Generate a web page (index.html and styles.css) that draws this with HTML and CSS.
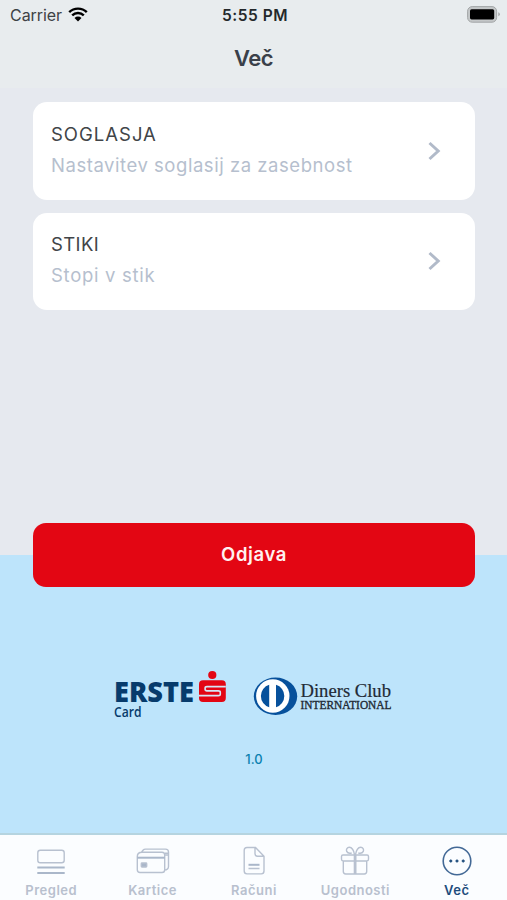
FILE: index.html
```html
<!DOCTYPE html>
<html lang="sl">
<head>
    <meta charset="UTF-8">
    <meta name="viewport" content="width=device-width, initial-scale=1.0">
    <title>Več</title>
    <link rel="stylesheet" href="styles.css">
</head>
<body>
    <div class="app">
        <div class="status-bar">
            <div class="carrier">
                <span>Carrier</span>
                <svg width="20" height="15" viewBox="0 0 20 15">
                    <path d="M1.2 5.2a12.6 12.6 0 0 1 17.6 0M4.2 8.3a8.3 8.3 0 0 1 11.6 0" fill="none" stroke="#000" stroke-width="2.4"/>
                    <path d="M6.5 11a5 5 0 0 1 7 0L10 14.6z"/>
                </svg>
            </div>
            <div class="clock">5:55 PM</div>
            <div class="battery">
                <svg width="33" height="17" viewBox="0 0 33 17">
                    <rect x=".6" y=".6" width="29" height="15.6" rx="4.6" fill="#c4c7c8" stroke="#a3a6a7"/>
                    <rect x="3" y="3.2" width="24.2" height="10.2" rx="1.6"/>
                    <path d="M31.3 6.2q1.5.5 1.5 2t-1.5 2z" fill="#a3a6a7"/>
                </svg>
            </div>
        </div>

        <header class="header">
            <h1>Več</h1>
        </header>

        <main class="content">
            <a class="card" href="#">
                <div class="card-text">
                    <div class="card-title soglasja">SOGLASJA</div>
                    <div class="card-subtitle">Nastavitev soglasij za zasebnost</div>
                </div>
                <svg class="chevron" width="14" height="20" viewBox="0 0 14 20"><path d="M2.5 2l8.7 8-8.7 8"/></svg>
            </a>
            <a class="card" href="#">
                <div class="card-text">
                    <div class="card-title">STIKI</div>
                    <div class="card-subtitle stik">Stopi v stik</div>
                </div>
                <svg class="chevron" width="14" height="20" viewBox="0 0 14 20"><path d="M2.5 2l8.7 8-8.7 8"/></svg>
            </a>
        </main>

        <section class="bottom-panel">
            <button class="logout" type="button">Odjava</button>
            <div class="logos">
                <svg width="114" height="52" viewBox="0 0 114 52" fill="#073b6c">
                    <text x="1" y="31.7" class="erste" textLength="80" lengthAdjust="spacingAndGlyphs">ERSTE</text>
                    <text x="1" y="47" class="erste-card" textLength="27.5" lengthAdjust="spacingAndGlyphs">Card</text>
                    <g fill="#e30613">
                        <circle cx="99.3" cy="5" r="4.1"/>
                        <rect x="86" y="10.3" width="26.8" height="21.7" rx="4"/>
                    </g>
                    <path d="M112.8 16.6H94q-1.9 0-1.9 1.6v1.1q0 1.6 1.9 1.6h11.3q2 0 2 1.6v1.4q0 1.7-2 1.7H86" fill="none" stroke="#d5e6f5" stroke-width="1.6"/>
                </svg>
                <svg width="142" height="40" viewBox="0 0 142 40">
                    <ellipse cx="22.5" cy="19.3" rx="21.7" ry="18.7" fill="#07519c"/>
                    <circle cx="19.8" cy="19" r="16.7" fill="#fff"/>
                    <path d="M16.2 7.8a11.7 11.7 0 0 0 0 22.4zM23 7.8a11.7 11.7 0 0 1 0 22.4z" fill="#07519c"/>
                    <g fill="#222a35" class="diners">
                        <text x="47.5" y="19.8" font-size="19.5" stroke="#222a35" stroke-width=".2" textLength="90.5" lengthAdjust="spacingAndGlyphs">Diners Club</text>
                        <text x="47.5" y="31.6" font-size="11.5" stroke="#222a35" stroke-width=".35" textLength="91" lengthAdjust="spacingAndGlyphs">INTERNATIONAL</text>
                    </g>
                </svg>
            </div>
            <div class="version">1.0</div>
        </section>

        <nav class="tab-bar">
            <a class="tab" href="#">
                <svg width="32" height="32" viewBox="0 0 32 32">
                    <rect x="2.8" y="5.2" width="26.4" height="12.6" rx="2.5"/>
                    <path class="thick" d="M2.3 22.6h27.4M2.3 28h27.4"/>
                </svg>
                <span>Pregled</span>
            </a>
            <a class="tab" href="#">
                <svg width="36" height="32" viewBox="0 0 36 32">
                    <path d="M6.5 7.2L8 5.3q1-1.2 2.5-1.2h20q3 0 3 3v14.4q0 3.4-4.2 3.6M7 7.2h20q2.7 0 2.7 2.8v14.7q0 2.8-2.7 2.8H5q-2.7 0-2.7-2.8V11.5Q2.3 7.2 7 7.2zM29.8 8.2h3.7M29.8 10h3.7"/>
                    <path class="thick" d="M2.3 12.7h27.4"/>
                    <rect class="filled" x="6.3" y="18" width="5.4" height="4" rx=".7"/>
                </svg>
                <span>Kartice</span>
            </a>
            <a class="tab" href="#">
                <svg width="28" height="32" viewBox="0 0 28 32">
                    <path d="M15.5 2.5H7q-2.8 0-2.8 2.8v20.8q0 2.8 2.8 2.8h14.3q2.7 0 2.7-2.8V11.2L15.5 2.5zM15 2.8v6q0 2.4 2.4 2.4H24M8.5 23.5h11"/>
                    <path class="thick" d="M8.5 19.8h11"/>
                </svg>
                <span>Računi</span>
            </a>
            <a class="tab" href="#">
                <svg width="32" height="32" viewBox="0 0 32 32">
                    <path d="M4.3 16v10.6q0 2.4 2.4 2.4h18.6q2.4 0 2.4-2.4V16M4 10h24q1.5 0 1.5 1.5v2.8q0 1.7-1.7 1.7H4.2q-1.7 0-1.7-1.7v-2.8Q2.5 10 4 10zM15.4 10v19M16.8 10v19M15.7 10.3C14.8 5 12.5 2.2 10.3 2.2S6.9 4.7 7.7 6.4 10.5 8.6 12.7 8M16.3 10.3c.9-5.3 3.2-8.1 5.4-8.1s3.4 2.5 2.6 4.2S21.5 8.6 19.3 8"/>
                </svg>
                <span>Ugodnosti</span>
            </a>
            <a class="tab active" href="#">
                <svg width="32" height="32" viewBox="0 0 32 32">
                    <circle cx="16" cy="16" r="13.8"/>
                    <g class="filled"><circle cx="9.8" cy="16" r="1.1"/><circle cx="16" cy="16" r="1.1"/><circle cx="22.2" cy="16" r="1.1"/></g>
                </svg>
                <span>Več</span>
            </a>
        </nav>
    </div>
</body>
</html>
```
FILE: styles.css
```css
:root {
    --page-bg: #e6e9ef;
    --header-bg: #e8ecee;
    --panel-bg: #bde4fb;
    --primary-red: #e30613;
    --text-dark: #414448;
    --text-muted: #b6bfce;
    --active-blue: #1d4c7c;
    --font-family: Inter, 'Liberation Sans', sans-serif;
}
*, *::before, *::after { box-sizing: border-box; }
body { margin: 0; font-family: var(--font-family); background-color: var(--page-bg); }
a { color: inherit; text-decoration: none; }
svg { display: block; flex-shrink: 0; }
.app { height: 900px; display: flex; flex-direction: column; }
.status-bar { height: 30px; display: grid; grid-template-columns: 1fr auto 1fr; align-items: center; padding: 0 7px 0 10px; background-color: var(--header-bg); color: #24282b; font-size: 16px; }
.carrier { display: flex; align-items: center; gap: 6px; color: #3e4245; letter-spacing: -0.05px; }
.carrier svg { margin-top: -2px; }
.clock { font-weight: 600; font-size: 15.5px; letter-spacing: 0.5px; }
.battery { display: flex; justify-content: flex-end; margin-top: -2px; }
.header { height: 58px; display: flex; justify-content: center; background-color: var(--header-bg); }
.header h1 { margin: 14px 0 0; font-size: 22px; line-height: 28px; font-weight: 600; color: #3a4049; letter-spacing: -0.5px; }
.content { flex: 1; display: flex; flex-direction: column; gap: 13px; padding: 14px 32px 0 33px; }
.card { height: 97.5px; display: flex; align-items: center; justify-content: space-between; padding: 0 34px 0 18px; background-color: #fff; border-radius: 14px; }
.card-text { display: flex; flex-direction: column; gap: 7px; margin-top: -3px; white-space: nowrap; }
.card-title { font-size: 18.5px; line-height: 24px; color: var(--text-dark); letter-spacing: 0.4px; }
.card-title.soglasja { letter-spacing: 1px; }
.card-subtitle { font-size: 18.5px; line-height: 24px; color: var(--text-muted); letter-spacing: 0.54px; }
.card-subtitle.stik { letter-spacing: 0.7px; }
.chevron { fill: none; stroke: #b1bac9; stroke-width: 3; }
.bottom-panel { height: 278px; display: flex; flex-direction: column; align-items: center; padding: 0 32px 0 33px; background-color: var(--panel-bg); }
.logout { width: 100%; height: 64px; flex-shrink: 0; margin-top: -32px; padding: 0 0 3px; border: 0; border-radius: 13px; background-color: var(--primary-red); color: #fff1f0; font: 600 18.5px var(--font-family); letter-spacing: 0.6px; }
.logos { width: 100%; display: flex; align-items: flex-start; gap: 26px; padding-left: 80px; margin-top: 83px; }
.logos svg:last-child { margin-top: 7px; }
.erste { font: 800 29px 'Open Sans', sans-serif; }
.erste-card { font: 600 15px 'Open Sans', sans-serif; }
.diners { font-family: 'Liberation Serif', serif; }
.version { margin-top: 29px; font-size: 13px; line-height: 16px; font-weight: 500; color: #0b80af; }
.tab-bar { height: 67px; display: grid; grid-template-columns: repeat(5, 1fr); padding-top: 10px; border-top: 2px solid #b5d4e0; background-color: #fbfdff; }
.tab { display: flex; flex-direction: column; align-items: center; gap: 5px; padding-left: 1px; font-size: 13px; line-height: 16px; font-weight: 600; color: #b8c0ce; letter-spacing: 0.5px; }
.tab svg { fill: none; stroke: #b8c1d0; stroke-width: 1.4; }
.tab .thick { stroke: #aab7ca; stroke-width: 2; }
.tab .filled { fill: #aab7ca; }
.tab.active { color: var(--active-blue); }
.tab.active svg { stroke: #436996; stroke-width: 1.6; }
.tab.active .filled { fill: var(--active-blue); stroke: var(--active-blue); stroke-width: 1; }
```
